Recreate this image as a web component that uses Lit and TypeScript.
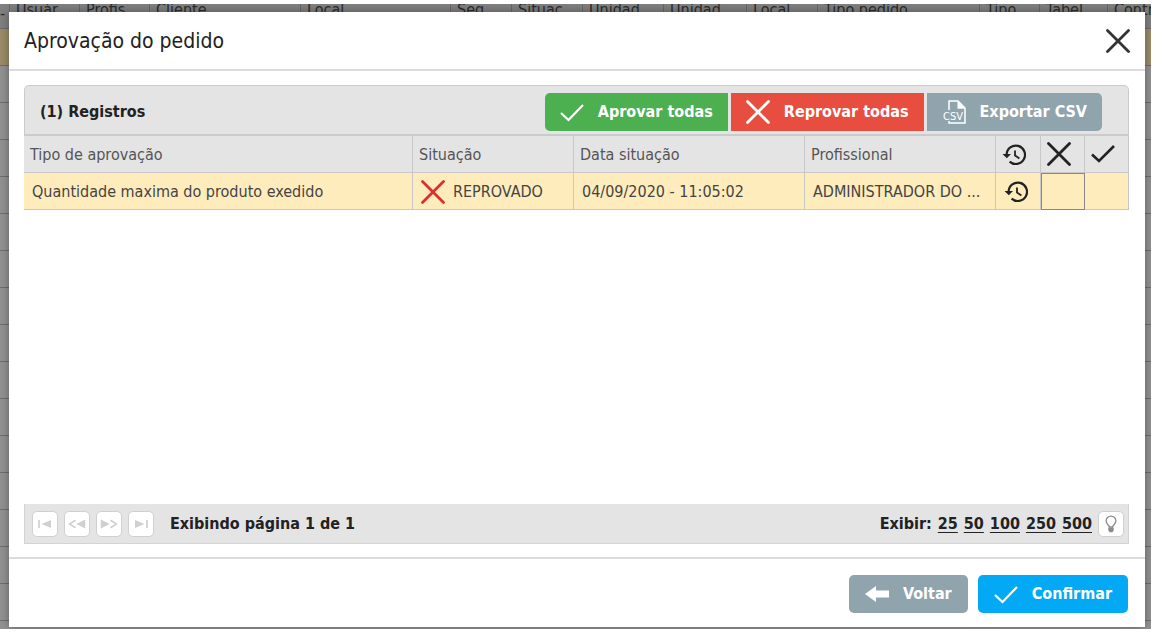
import { LitElement, html, css, svg } from "lit";
import { customElement } from "lit/decorators.js";

const icon = (cls: string, body: unknown) =>
  html`<svg class=${cls} viewBox="0 0 24 24" aria-hidden="true">${body}</svg>`;

const cross = svg`<path d="M1.5 1.5 L22.5 22.5 M22.5 1.5 L1.5 22.5" fill="none" stroke="currentColor" stroke-width="2.8" stroke-linecap="round"/>`;
const check = svg`<path d="M1 13 L8.5 20 L23 5" fill="none" stroke="currentColor" stroke-width="2.2"/>`;
const boldCheck = svg`<path d="M1 12.5 L8 19 L23 4" fill="none" stroke="currentColor" stroke-width="2.6"/>`;
const history = svg`
  <path d="M4.6 12.5 A9.2 9.2 0 1 1 7.6 19.6" fill="none" stroke="currentColor" stroke-width="2.2"/>
  <path d="M0.5 12 H9 L4.8 16.2 Z" fill="currentColor"/>
  <path d="M13 8.4 V13.4 L17.4 16.4" fill="none" stroke="currentColor" stroke-width="1.8"/>`;
const arrowLeft = svg`<path d="M0 12 L11 4 V8.6 H24 V15.4 H11 V20 Z" fill="currentColor"/>`;
const csvFile = svg`
  <path d="M7 10 V1 H16 L23 8 V23 H7 V21" fill="none" stroke="currentColor" stroke-width="1.5"/>
  <path d="M15.5 1 L23 8.8 H15.5 Z" fill="currentColor"/>
  <text x="1" y="19.5" font-size="11" font-weight="400" fill="currentColor">CSV</text>`;
const bulb = svg`
  <path d="M10 16 C10 13.5 5.5 12.5 5.5 7.8 A6.5 6.3 0 0 1 18.5 7.8 C18.5 12.5 14 13.5 14 16 Z" fill="none" stroke="currentColor" stroke-width="1.8"/>
  <path d="M8.4 16.6 H15.6 V20.6 L13.8 23 H10.2 L8.4 20.6 Z" fill="currentColor"/>`;

const first = svg`<path d="M3 6 V18" stroke="currentColor" stroke-width="2.6"/><path d="M21 6 V18 L7 12 Z" fill="currentColor"/>`;
const prev = svg`<path d="M10 7 L2 12 L10 17" fill="none" stroke="currentColor" stroke-width="2.4"/><path d="M23 6 V18 L11 12 Z" fill="currentColor"/>`;
const next = svg`<path d="M14 7 L22 12 L14 17" fill="none" stroke="currentColor" stroke-width="2.4"/><path d="M1 6 V18 L13 12 Z" fill="currentColor"/>`;
const last = svg`<path d="M21 6 V18" stroke="currentColor" stroke-width="2.6"/><path d="M3 6 V18 L17 12 Z" fill="currentColor"/>`;

const ORDER_COLUMNS: [string, number][] = [
  ["-", 9], ["Usuár", 70], ["Profis", 70], ["Cliente", 151], ["Local", 150],
  ["Seq", 61], ["Situac", 71], ["Unidad", 81], ["Unidad", 83], ["Local", 71],
  ["Tipo pedido", 162], ["Tipo", 60], ["Tabel", 68], ["Contr", 44],
];

@customElement("order-grid")
class OrderGrid extends LitElement {
  static styles = css`
    :host { display: block; overflow: hidden; background: #929292; }
    .grid { border-collapse: separate; border-spacing: 0; table-layout: fixed; width: 100%; }
    .head {
      height: 24px; padding: 0 0 0 6px; vertical-align: top; text-align: left;
      font-weight: 400; font-size: 16px; line-height: 12px; color: #2c2c2c;
      background: #808080; border-bottom: 1px solid #6c6c6c; border-left: 1px solid #696969;
      white-space: nowrap; overflow: hidden;
    }
    .head:first-child { padding: 0; border-left: 0; line-height: 20px; }
    .cell { height: 36px; padding: 0; border-bottom: 1px solid #6e6e6e; }
    .selected { background: #9a8c68; }
  `;

  render() {
    return html`<table class="grid" aria-hidden="true">
      <colgroup>${ORDER_COLUMNS.map(([, w]) => html`<col width=${w} />`)}</colgroup>
      <thead><tr>${ORDER_COLUMNS.map(([t]) => html`<th class="head">${t}</th>`)}</tr></thead>
      <tbody>
        ${Array.from({ length: 17 }, (_, i) => html`<tr>
          <td class="cell ${i === 0 ? "selected" : ""}" colspan="14"></td>
        </tr>`)}
      </tbody>
    </table>`;
  }
}

@customElement("app-root")
class AppRoot extends LitElement {
  static styles = css`
    :host {
      display: grid; grid-template: minmax(0, 1fr) / minmax(0, 1fr);
      box-sizing: border-box; height: 100vh; padding: 4px 4px 3px 0; background: #fff;
      font-family: "DejaVu Sans Condensed", "DejaVu Sans", "Noto Sans", sans-serif;
      font-size: 16px; line-height: 20px; color: #222;
    }
    .back, .dialog { grid-area: 1 / 1; }
    .dialog {
      display: flex; flex-direction: column; margin: 8px 6px 2px 9px; z-index: 1;
      background: #fff; box-shadow: 0 0 9px rgba(0, 0, 0, 0.35); clip-path: inset(-8px -6px -2px -9px);
    }
    .top {
      display: flex; align-items: center; justify-content: space-between;
      height: 57px; padding: 0 15px; border-bottom: 2px solid #dcdcdc;
    }
    .title { margin: 0; font-size: 21px; line-height: 24px; font-weight: 400; color: #222; }
    button { font: inherit; cursor: pointer; border: 0; padding: 0; margin: 0; background: none; color: inherit; }
    .close { display: flex; color: #333; }
    .i24 { width: 24px; height: 24px; display: block; flex: none; }
    .i16 { width: 16px; height: 16px; display: block; }
    .i18 { width: 18px; height: 18px; display: block; }

    .body { flex: 1; display: flex; flex-direction: column; padding: 14px 16px 13px 15px; }
    .bar {
      display: flex; align-items: center; justify-content: space-between; box-sizing: border-box;
      height: 51px; padding: 3px 26px 0 15px; background: #e4e4e4;
      border: 1px solid #cbcbcb; border-bottom-width: 2px; border-radius: 5px 5px 0 0;
    }
    .count { margin: 0; font-size: 16px; line-height: 20px; font-weight: 700; color: #222; }
    .group { display: flex; gap: 3px; }
    .btn {
      display: flex; align-items: center; height: 38px; gap: 14px; padding: 0 15px;
      color: #fff; font-weight: 700; white-space: nowrap;
    }
    .green { background: #4caf50; border-radius: 5px 0 0 5px; }
    .red { background: #e84e40; }
    .slate { background: #90a4ae; }
    .blue { background: #03a9f4; }
    .end { border-radius: 0 5px 5px 0; }
    .round { border-radius: 5px; padding: 0 16px; }

    .data { width: 100%; border-collapse: separate; border-spacing: 0; table-layout: fixed; }
    .c-status { width: 161px; } .c-date { width: 231px; } .c-user { width: 191px; }
    .c-hist { width: 45px; } .c-act { width: 44px; }
    .th, .td {
      box-sizing: border-box; height: 37px; padding: 2px 6px 0; text-align: left; font-weight: 400;
      border-right: 1px solid #c8c8c8; border-bottom: 1px solid #c8c8c8;
      white-space: nowrap; overflow: hidden; text-overflow: ellipsis;
    }
    .th { background: #e4e4e4; color: #555; }
    .td { background: #ffecbc; color: #444; padding: 2px 8px 0; }
    .sym { padding: 0 6px; color: #222; }
    .sym.td { padding: 4px 0 0 8px; }
    .focus { border: 1px solid #888; }
    .status { display: flex; align-items: center; gap: 8px; }
    .no { color: #d92f2f; display: flex; }

    .pager {
      display: flex; align-items: center; justify-content: space-between; box-sizing: border-box;
      height: 40px; margin-top: auto; padding: 0 4px 0 7px; background: #e4e4e4;
      border: 1px solid #d3d3d3; border-top: 0; font-weight: 700;
    }
    .nav, .sizes { display: flex; align-items: center; gap: 6px; }
    .page { margin-left: 10px; }
    .sq {
      display: flex; align-items: center; justify-content: center; box-sizing: border-box;
      width: 26px; height: 26px; border: 1px solid #d0d0d0; border-radius: 5px; background: #fff; color: #d0d0d0;
    }
    .tip { color: #8c8c8c; }
    .size { color: #222; text-underline-offset: 3px; }
    .foot {
      display: flex; justify-content: flex-end; gap: 10px; padding: 16px 17px 14px;
      border-top: 2px solid #dcdcdc;
    }
  `;

  render() {
    return html`
      <order-grid class="back"></order-grid>
      <section class="dialog" role="dialog" aria-labelledby="title">
        <header class="top">
          <h1 class="title" id="title">Aprovação do pedido</h1>
          <button class="close" aria-label="Fechar">${icon("i24", cross)}</button>
        </header>
        <div class="body">
          <div class="bar">
            <h2 class="count">(1) Registros</h2>
            <div class="group">
              <button class="btn green">${icon("i24", check)}Aprovar todas</button>
              <button class="btn red">${icon("i24", cross)}Reprovar todas</button>
              <button class="btn slate end">${icon("i24", csvFile)}Exportar CSV</button>
            </div>
          </div>
          <table class="data">
            <colgroup>
              <col /><col class="c-status" /><col class="c-date" /><col class="c-user" />
              <col class="c-hist" /><col class="c-act" /><col class="c-act" />
            </colgroup>
            <thead>
              <tr>
                <th class="th">Tipo de aprovação</th>
                <th class="th">Situação</th>
                <th class="th">Data situação</th>
                <th class="th">Profissional</th>
                <th class="th sym" aria-label="Histórico">${icon("i24", history)}</th>
                <th class="th sym" aria-label="Reprovar">${icon("i24", cross)}</th>
                <th class="th sym" aria-label="Aprovar">${icon("i24", boldCheck)}</th>
              </tr>
            </thead>
            <tbody>
              <tr>
                <td class="td">Quantidade maxima do produto exedido</td>
                <td class="td"><span class="status"><span class="no">${icon("i24", cross)}</span>REPROVADO</span></td>
                <td class="td">04/09/2020 - 11:05:02</td>
                <td class="td">ADMINISTRADOR DO ...</td>
                <td class="td sym"><button aria-label="Ver histórico">${icon("i24", history)}</button></td>
                <td class="td focus"></td>
                <td class="td"></td>
              </tr>
            </tbody>
          </table>
          <div class="pager">
            <div class="nav">
              <button class="sq" aria-label="Primeira página">${icon("i16", first)}</button>
              <button class="sq" aria-label="Página anterior">${icon("i18", prev)}</button>
              <button class="sq" aria-label="Próxima página">${icon("i18", next)}</button>
              <button class="sq" aria-label="Última página">${icon("i16", last)}</button>
              <span class="page">Exibindo página 1 de 1</span>
            </div>
            <div class="sizes">
              <span>Exibir:</span>
              ${[25, 50, 100, 250, 500].map((n) => html`<a class="size" href="#${n}">${n}</a>`)}
              <button class="sq tip" aria-label="Ajuda">${icon("i18", bulb)}</button>
            </div>
          </div>
        </div>
        <footer class="foot">
          <button class="btn slate round">${icon("i24", arrowLeft)}Voltar</button>
          <button class="btn blue round">${icon("i24", check)}Confirmar</button>
        </footer>
      </section>
    `;
  }
}
